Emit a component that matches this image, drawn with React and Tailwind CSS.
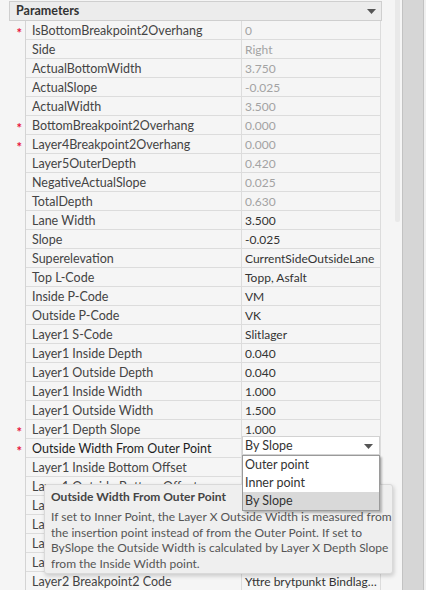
import React from "react";

const rows = [
  { name: "IsBottomBreakpoint2Overhang", value: "0", ro: true, req: true },
  { name: "Side", value: "Right", ro: true },
  { name: "ActualBottomWidth", value: "3.750", ro: true },
  { name: "ActualSlope", value: "-0.025", ro: true },
  { name: "ActualWidth", value: "3.500", ro: true },
  { name: "BottomBreakpoint2Overhang", value: "0.000", ro: true, req: true },
  { name: "Layer4Breakpoint2Overhang", value: "0.000", ro: true, req: true },
  { name: "Layer5OuterDepth", value: "0.420", ro: true },
  { name: "NegativeActualSlope", value: "0.025", ro: true },
  { name: "TotalDepth", value: "0.630", ro: true },
  { name: "Lane Width", value: "3.500" },
  { name: "Slope", value: "-0.025" },
  { name: "Superelevation", value: "CurrentSideOutsideLane" },
  { name: "Top L-Code", value: "Topp, Asfalt" },
  { name: "Inside P-Code", value: "VM" },
  { name: "Outside P-Code", value: "VK" },
  { name: "Layer1 S-Code", value: "Slitlager" },
  { name: "Layer1 Inside Depth", value: "0.040" },
  { name: "Layer1 Outside Depth", value: "0.040" },
  { name: "Layer1 Inside Width", value: "1.000" },
  { name: "Layer1 Outside Width", value: "1.500" },
  { name: "Layer1 Depth Slope", value: "1.000", req: true },
  { name: "Outside Width From Outer Point", value: "", req: true, selected: true },
  { name: "Layer1 Inside Bottom Offset", value: "0.000" },
  { name: "Layer1 Outside Bottom Offset", value: "0.000" },
  { name: "Layer2 Inside Depth", value: "0.050" },
  { name: "Layer2 Outside Depth", value: "0.050" },
  { name: "Layer2 S-Code", value: "Bindlager" },
  { name: "Layer2 Breakpoint1 Code", value: "Inre brytpunkt" },
  { name: "Layer2 Breakpoint2 Code", value: "Yttre brytpunkt Bindlager" },
];

function Caret() {
  return (
    <svg width="9" height="5" viewBox="0 0 9 5">
      <path d="M0 0 L9 0 L4.5 5 Z" fill="#555" />
    </svg>
  );
}

function Row({ row }) {
  return (
    <div className="flex h-[19px]">
      <div className="w-[26px] shrink-0 flex items-center justify-end pr-[3px] border-r border-[#d4d4d4]">
        {row.req && (
          <span className="text-[#e8123c] text-[13px] leading-none font-bold mt-[5px]">*</span>
        )}
      </div>
      <div className="flex border-b border-[#dcdcdc] w-[355px] leading-[16px]">
        <div
          className={
            "w-[216px] shrink-0 pl-[6px] pt-[2px] text-[12.5px] border-r border-[#dcdcdc] whitespace-nowrap overflow-hidden " +
            (row.selected ? "text-[#1e1e1e]" : "text-[#444]")
          }
        >
          {row.name}
        </div>
        <div
          className={
            "flex-1 min-w-0 pl-[3px] pr-[2px] pt-[2px] text-[12px] border-r border-[#dcdcdc] whitespace-nowrap overflow-hidden text-ellipsis " +
            (row.ro ? "text-[#a3a3a3]" : "text-[#333]")
          }
        >
          {row.value}
        </div>
      </div>
    </div>
  );
}

export default function App() {
  return (
    <div
      className="relative w-[426px] h-[590px] overflow-hidden bg-[#f5f5f5] flex text-[12px]"
      style={{ fontFamily: "Lato, 'Noto Sans', sans-serif" }}
    >
      <div className="w-[392px] shrink-0 pt-[1px]">
        <div className="ml-[9px] w-[373px] h-[20px] border border-[#cfcfcf] bg-[#ececec] flex items-center justify-between pl-[6px] pr-[5px]">
          <span className="font-bold text-[#333] text-[12.5px]">Parameters</span>
          <Caret />
        </div>
        {rows.map((r) => (
          <Row key={r.name} row={r} />
        ))}
      </div>

      <div className="w-[10px] shrink-0 flex justify-center">
        <div className="w-[5px] h-[222px] bg-[#e9e9e9] rounded-b-[2px]" />
      </div>
      <div className="w-[22px] shrink-0 border-l border-r border-[#c2c2c2] bg-[#d6d6d6]" />
      <div className="flex-1 bg-[#f0f0f0]" />

      {/* tooltip */}
      <div className="absolute left-[44px] top-[484px] w-[349px] h-[90px] bg-[#efefef] border border-[#d9d9d9] rounded-[3px] shadow-[1px_2px_4px_rgba(0,0,0,0.18)] px-[6px] pt-[4px] text-[#555] leading-[15.4px]">
        <div className="font-bold text-[#444] mb-[5px]">Outside Width From Outer Point</div>
        <div className="whitespace-nowrap">If set to Inner Point, the Layer X Outside Width is measured from</div>
        <div className="whitespace-nowrap">the insertion point instead of from the Outer Point. If set to</div>
        <div className="whitespace-nowrap">BySlope the Outside Width is calculated by Layer X Depth Slope</div>
        <div className="whitespace-nowrap">from the Inside Width point.</div>
      </div>

      {/* combo box */}
      <div className="absolute left-[242px] top-[436px] w-[138px] h-[19px] bg-white border border-[#d2d2d2] flex items-center justify-between pl-[2px] pr-[6px] pt-[1px] text-[#333] text-[12.5px]">
        <span>By Slope</span>
        <Caret />
      </div>
      <div className="absolute left-[242px] top-[455px] w-[138px] bg-white border border-[#9a9a9a] shadow-[2px_2px_2px_rgba(0,0,0,0.25)] text-[#333] text-[12.5px]">
        <div className="h-[18px] pl-[2px] pt-[1px] flex items-center">Outer point</div>
        <div className="h-[18px] pl-[2px] pt-[1px] flex items-center">Inner point</div>
        <div className="h-[18px] pl-[2px] pt-[1px] flex items-center bg-[#d9d9d9]">By Slope</div>
      </div>
    </div>
  );
}
